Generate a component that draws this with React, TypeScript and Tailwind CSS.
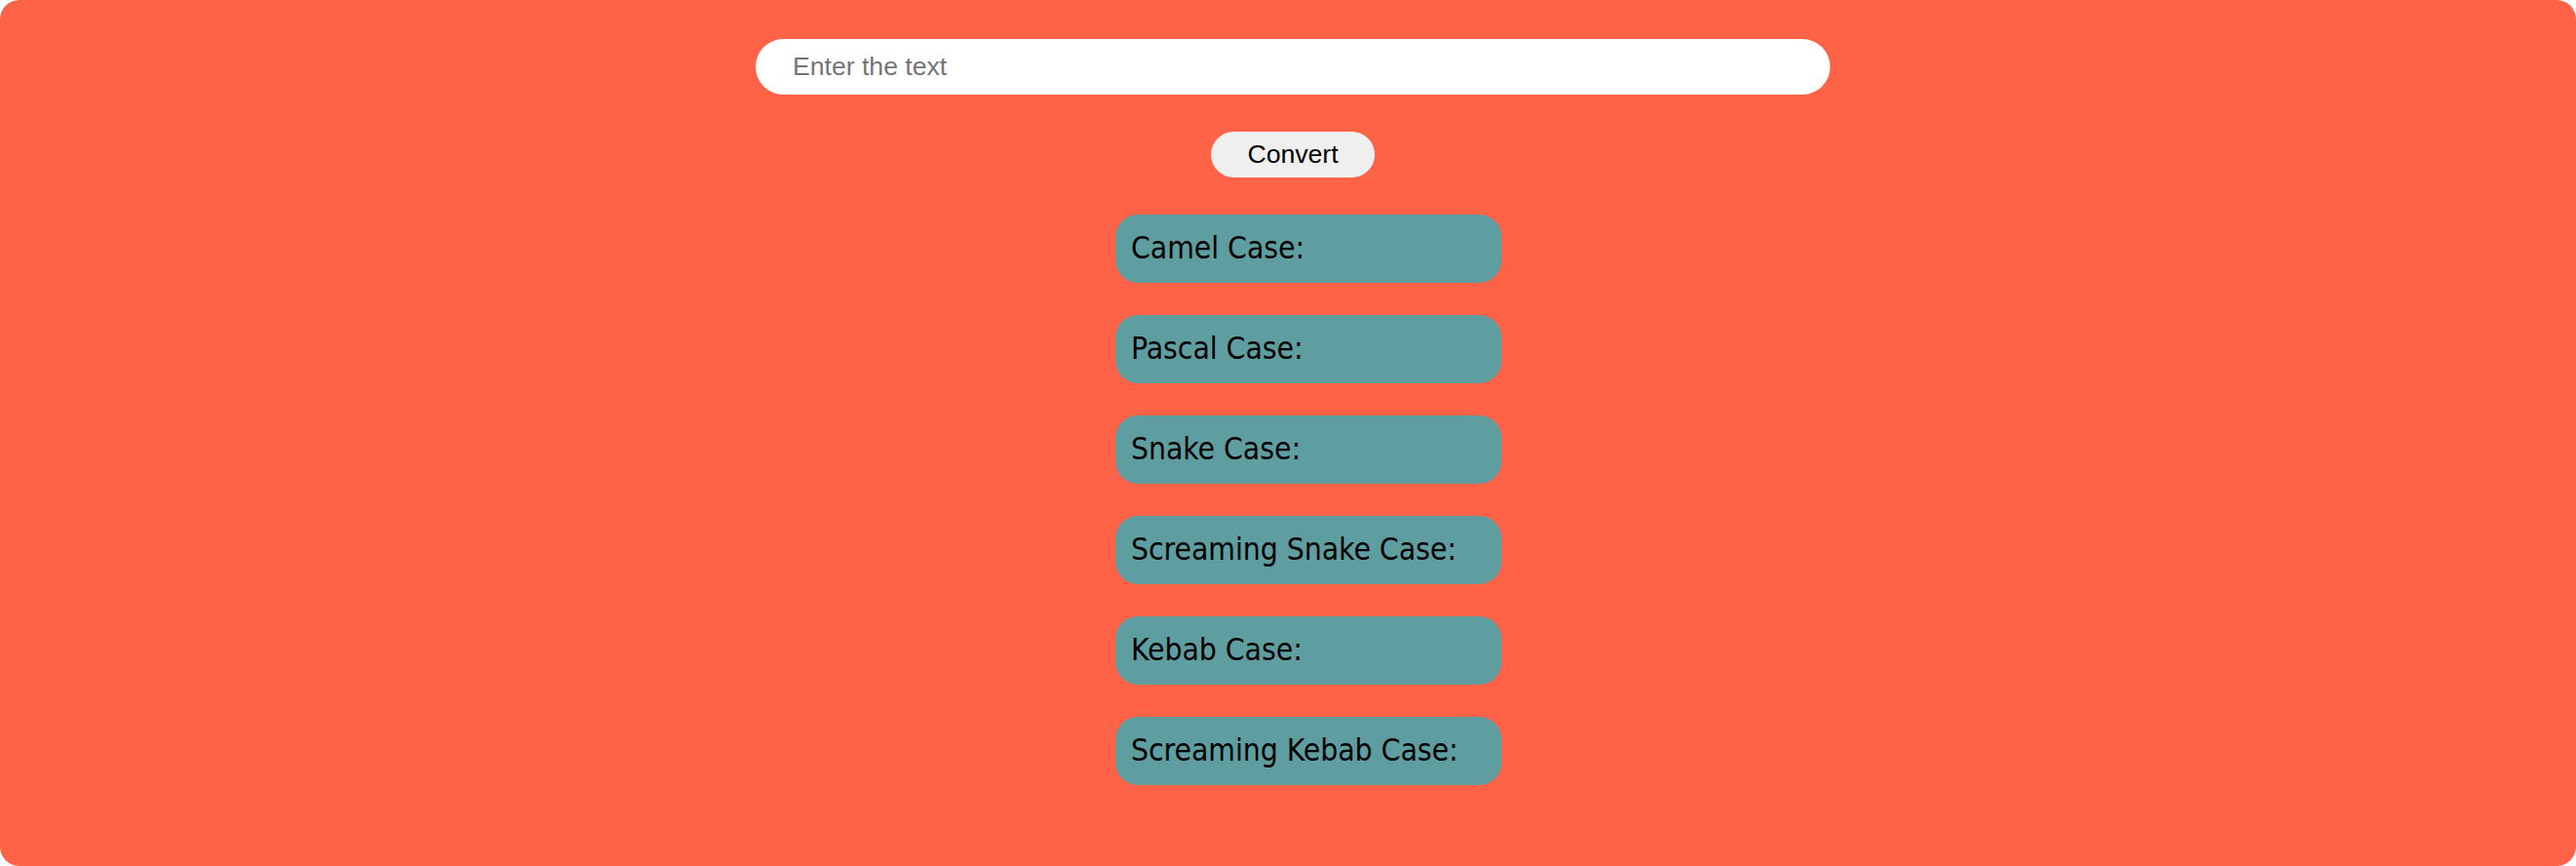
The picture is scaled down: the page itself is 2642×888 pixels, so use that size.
import React from "react";

const labels = [
  "Camel Case:",
  "Pascal Case:",
  "Snake Case:",
  "Screaming Snake Case:",
  "Kebab Case:",
  "Screaming Kebab Case:",
];

export default function App() {
  return (
    <div className="w-[2642px] h-[888px] bg-white">
      <div className="w-full h-full bg-[#ff6347] rounded-[20px] flex flex-col items-start pt-[40px]">
        <input
          type="text"
          placeholder="Enter the text"
          className="ml-[775px] w-[1102px] h-[57px] rounded-full bg-white px-[38px] text-[26.6px] text-black placeholder:text-[#757575] outline-none border-0 font-['Liberation_Sans',Arial,sans-serif]"
        />
        <button className="ml-[1242px] mt-[38px] w-[168px] h-[47px] rounded-full bg-[#efefef] text-black text-[26.6px] font-['Liberation_Sans',Arial,sans-serif] flex items-center justify-center">
          Convert
        </button>
        <div className="ml-[1144px] mt-[38px] flex flex-col gap-[33px]">
          {labels.map((l) => (
            <div
              key={l}
              className="w-[396px] h-[70px] rounded-[23px] bg-[#5f9ea0] px-[16px] flex items-center text-black text-[31.5px] whitespace-nowrap font-['DejaVu_Sans_Condensed','DejaVu_Sans',sans-serif]"
            >
              {l}
            </div>
          ))}
        </div>
      </div>
    </div>
  );
}
